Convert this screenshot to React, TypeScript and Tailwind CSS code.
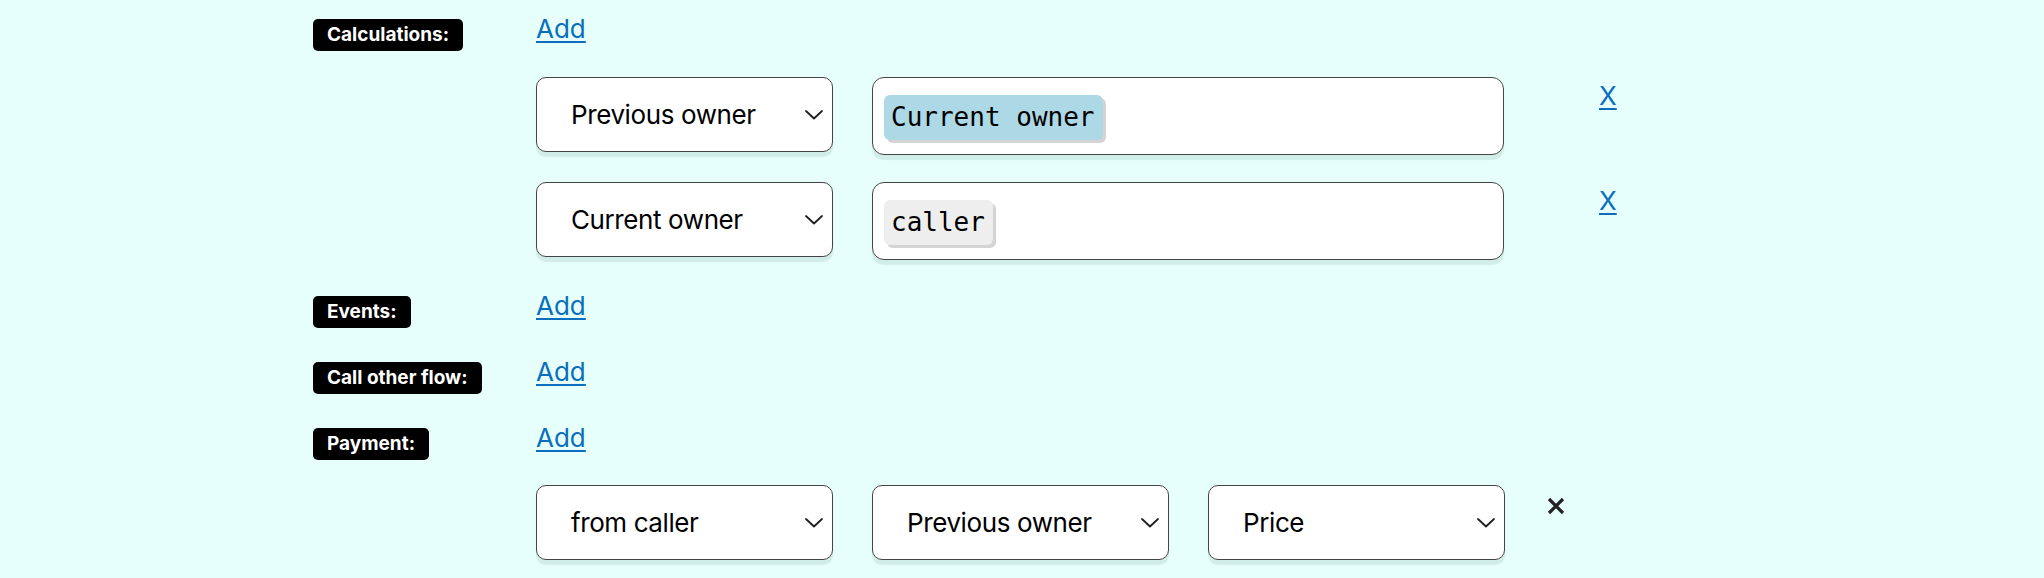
import React from "react";

const Chevron = () => (
  <svg width="18" height="10" viewBox="0 0 18 10" fill="none" className="shrink-0">
    <polyline points="1,1 9,8.5 17,1" stroke="#1f1f1f" strokeWidth="1.8" strokeLinecap="round" strokeLinejoin="round" />
  </svg>
);

const Select = ({ value }: { value: string }) => (
  <div className="w-[297px] h-[75px] shrink-0 rounded-[10px] border border-[#444] bg-white shadow-[0_5px_1px_rgba(0,60,40,0.09)] flex items-center justify-between pl-[34px] pr-[9px] text-[26px] tracking-[-0.4px] text-black">
    <span>{value}</span>
    <Chevron />
  </div>
);

const Token = ({ text, color }: { text: string; color: string }) => (
  <span
    className={`h-[45px] inline-flex items-center pl-[7px] pr-[8px] rounded-[6px] shadow-[3px_3px_0_#d4d4d4] text-[26px] text-black ${color}`}
    style={{ fontFamily: '"DejaVu Sans Mono", monospace' }}
  >
    {text}
  </span>
);

const Label = ({ text }: { text: string }) => (
  <div className="w-[223px] shrink-0 pt-[6px]">
    <span className="inline-flex h-[32px] items-center rounded-[5px] bg-black px-[14px] text-[19px] font-bold text-white">
      {text}
    </span>
  </div>
);

const AddLink = () => (
  <a href="#" className="text-[26px] leading-[32px] text-[#0a6ebd] underline underline-offset-[3px]">
    Add
  </a>
);

const Header = ({ label }: { label: string }) => (
  <div className="flex h-[38px] items-start">
    <Label text={label} />
    <AddLink />
  </div>
);

const CalcRow = ({ sel, token, color }: { sel: string; token: string; color: string }) => (
  <div className="flex items-start">
    <Select value={sel} />
    <div className="ml-[39px] w-[632px] h-[78px] shrink-0 rounded-[12px] border border-[#444] bg-white shadow-[0_5px_1px_rgba(0,60,40,0.09)] pl-[11px] pt-[17px]">
      <Token text={token} color={color} />
    </div>
    <a href="#" className="ml-[95px] mt-[3px] text-[26px] leading-[32px] text-[#0a6ebd] underline underline-offset-[3px]">
      X
    </a>
  </div>
);

export default function App() {
  return (
    <div
      className="min-h-screen w-full bg-[#e6fffa] pl-[313px] pt-[13px]"
      style={{ fontFamily: 'Inter, "Noto Sans", sans-serif' }}
    >
      <div className="flex flex-col gap-[28px]">
        <div className="mb-[2px]">
          <Header label="Calculations:" />
          <div className="ml-[223px] mt-[26px] flex flex-col gap-[27px]">
            <CalcRow sel="Previous owner" token="Current owner" color="bg-[#add8e6]" />
            <CalcRow sel="Current owner" token="caller" color="bg-[#eeeeee]" />
          </div>
        </div>
        <Header label="Events:" />
        <Header label="Call other flow:" />
        <div>
          <Header label="Payment:" />
          <div className="ml-[223px] mt-[25px] flex items-start gap-[39px]">
            <Select value="from caller" />
            <Select value="Previous owner" />
            <Select value="Price" />
            <svg width="18" height="18" viewBox="0 0 18 18" className="mt-[12px] ml-[3px]">
              <path d="M2 2 L16 16 M16 2 L2 16" stroke="#222" strokeWidth="3.2" />
            </svg>
          </div>
        </div>
      </div>
    </div>
  );
}
